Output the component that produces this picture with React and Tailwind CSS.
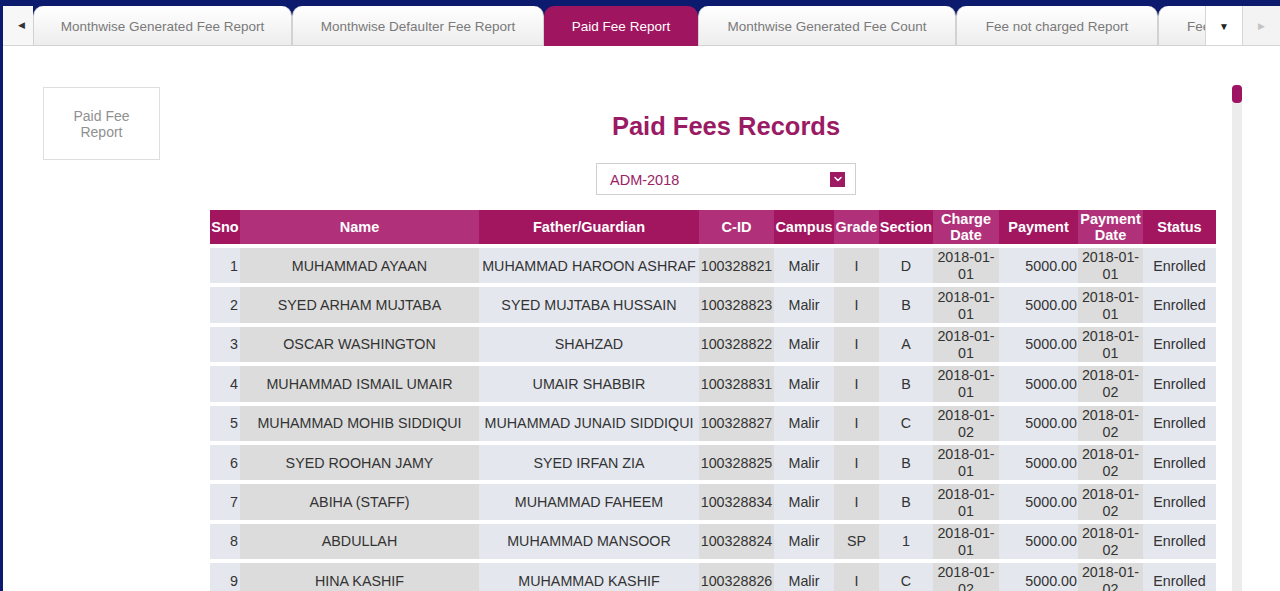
import { ChevronDown } from "lucide-react";

const rows = [
  ["1", "MUHAMMAD AYAAN", "MUHAMMAD HAROON ASHRAF", "100328821", "Malir", "I", "D", "01", "5000.00", "01", "Enrolled"],
  ["2", "SYED ARHAM MUJTABA", "SYED MUJTABA HUSSAIN", "100328823", "Malir", "I", "B", "01", "5000.00", "01", "Enrolled"],
  ["3", "OSCAR WASHINGTON", "SHAHZAD", "100328822", "Malir", "I", "A", "01", "5000.00", "01", "Enrolled"],
  ["4", "MUHAMMAD ISMAIL UMAIR", "UMAIR SHABBIR", "100328831", "Malir", "I", "B", "01", "5000.00", "02", "Enrolled"],
  ["5", "MUHAMMAD MOHIB SIDDIQUI", "MUHAMMAD JUNAID SIDDIQUI", "100328827", "Malir", "I", "C", "02", "5000.00", "02", "Enrolled"],
  ["6", "SYED ROOHAN JAMY", "SYED IRFAN ZIA", "100328825", "Malir", "I", "B", "01", "5000.00", "02", "Enrolled"],
  ["7", "ABIHA (STAFF)", "MUHAMMAD FAHEEM", "100328834", "Malir", "I", "B", "01", "5000.00", "02", "Enrolled"],
  ["8", "ABDULLAH", "MUHAMMAD MANSOOR", "100328824", "Malir", "SP", "1", "01", "5000.00", "02", "Enrolled"],
  ["9", "HINA KASHIF", "MUHAMMAD KASHIF", "100328826", "Malir", "I", "C", "02", "5000.00", "02", "Enrolled"],
];

const headers = [
  ["Sno", "w-[30px]"],
  ["Name", "w-[239px]"],
  ["Father/Guardian", "w-[220px]"],
  ["C-ID", "w-[75px]"],
  ["Campus", "w-[60px]"],
  ["Grade", "w-[45px]"],
  ["Section", "w-[54px]"],
  ["Charge Date", "w-[66px]"],
  ["Payment", "w-[79px]"],
  ["Payment Date", "w-[65px]"],
  ["Status", "w-[73px]"],
];

const tabs = [
  ["Monthwise Generated Fee Report", "w-[259px]"],
  ["Monthwise Defaulter Fee Report", "w-[252px]"],
  ["Paid Fee Report", "w-[154px]"],
  ["Monthwise Generated Fee Count", "w-[258px]"],
  ["Fee not charged Report", "w-[202px]"],
];

function TabBar() {
  return (
    <div className="flex h-[46px] bg-[#0d1b6e] pt-[6px]">
      <div className="flex w-[30px] items-center justify-end border-b border-[#d6d6d6] bg-[#f7f7f7] pr-[8px] text-[9px] text-[#333]">
        ◀
      </div>
      {tabs.map(([label, w]) => {
        const active = label === "Paid Fee Report";
        return (
          <div
            key={label}
            className={
              active
                ? `${w} flex items-center justify-center rounded-t-[10px] bg-[#a0155f] pt-[2px] text-[13.5px] text-white`
                : `${w} flex items-center justify-center rounded-t-[10px] border-x border-b border-[#d2d2d2] bg-gradient-to-b from-white to-[#ededed] pt-[3px] text-[13.5px] text-[#7a7a7a]`
            }
          >
            {label}
          </div>
        );
      })}
      <div className="flex w-[47px] items-center overflow-hidden rounded-tl-[10px] border-l border-b border-[#d2d2d2] bg-gradient-to-b from-white to-[#ededed] pl-[28px] pt-[3px] text-[13.5px] text-[#7a7a7a]">
        Fee
      </div>
      <div className="flex w-[38px] items-center justify-center border-x border-b border-[#d6d6d6] bg-white pt-[2px] text-[10px] text-[#222]">
        ▼
      </div>
      <div className="flex flex-1 items-center justify-center border-b border-[#d6d6d6] bg-[#f3f3f3] pt-[2px] text-[9px] text-[#c4c4c4]">
        ▶
      </div>
    </div>
  );
}

function FeeTable() {
  return (
    <table className="w-[1006px] table-fixed border-separate border-spacing-x-0 border-spacing-y-[4px] text-[14.3px] text-[#333]">
      <thead>
        <tr className="h-[34px]">
          {headers.map(([h, w], i) => (
            <th
              key={h}
              className={`${w} px-0 text-center text-[14.5px] font-bold leading-[16px] text-white ${
                i % 2 === 0 ? "bg-[#a1165f]" : "bg-[#b0317a]"
              }`}
            >
              {h === "Charge Date" ? (
                <>Charge<br />Date</>
              ) : h === "Payment Date" ? (
                <>Payment<br />Date</>
              ) : (
                h
              )}
            </th>
          ))}
        </tr>
      </thead>
      <tbody>
        {rows.map((r) => (
          <tr key={r[0]} className="h-[35.4px]">
            {r.map((c, i) => {
              const bg = i % 2 === 0 ? "bg-[#e4e7ee]" : "bg-[#dcdcdc]";
              let align = "text-center";
              if (i === 0) align = "text-right pr-[2px]";
              if (i === 8) align = "text-right pr-[1px]";
              const isDate = i === 7 || i === 9;
              return (
                <td key={i} className={`${bg} ${align} whitespace-nowrap p-0 pt-[1px] leading-[17px]`}>
                  {isDate ? (
                    <>2018-01-<br />{c}</>
                  ) : (
                    c
                  )}
                </td>
              );
            })}
          </tr>
        ))}
      </tbody>
    </table>
  );
}

export default function App() {
  return (
    <div
      className="h-[591px] overflow-hidden border-l-[3px] border-[#0d1b6e] bg-white"
      style={{ fontFamily: '"Liberation Sans", Arial, sans-serif' }}
    >
      <TabBar />

      <div className="flex">
        {/* Left menu */}
        <div className="w-[207px] flex-shrink-0 pl-[40px] pt-[41px]">
          <div className="flex h-[73px] w-[117px] items-center justify-center border border-[#dedede] text-center text-[14px] leading-[16px] text-[#909090]">
            Paid Fee
            <br />
            Report
          </div>
        </div>

        {/* Report area */}
        <div className="flex w-[1032px] flex-shrink-0">
          <div className="w-[1022px]">
            <h1 className="mt-[65px] pl-[10px] text-center text-[25.5px] font-bold leading-[30px] text-[#9b1a64]">
              Paid Fees Records
            </h1>
            <div className="mt-[22px] flex justify-center pl-[10px]">
              <div className="flex h-[32px] w-[260px] items-center justify-between border border-[#cfcfcf] pl-[13px] pr-[10px] text-[14.5px] text-[#9b2266]">
                <span className="pt-[4px]">ADM-2018</span>
                <span className="flex h-[15px] w-[15px] items-center justify-center bg-[#9e1a62]">
                  <ChevronDown className="h-[12px] w-[12px] text-white" strokeWidth={3} />
                </span>
              </div>
            </div>
            <div className="mt-[11px]">
              <FeeTable />
            </div>
          </div>

          {/* Scrollbar */}
          <div className="mt-[39px] w-[10px]">
            <div className="h-[600px] w-[10px] rounded-t-[5px] bg-[#ececec]">
              <div className="h-[18px] w-[10px] rounded-[4px] bg-[#9e1462]" />
            </div>
          </div>
        </div>
      </div>
    </div>
  );
}
